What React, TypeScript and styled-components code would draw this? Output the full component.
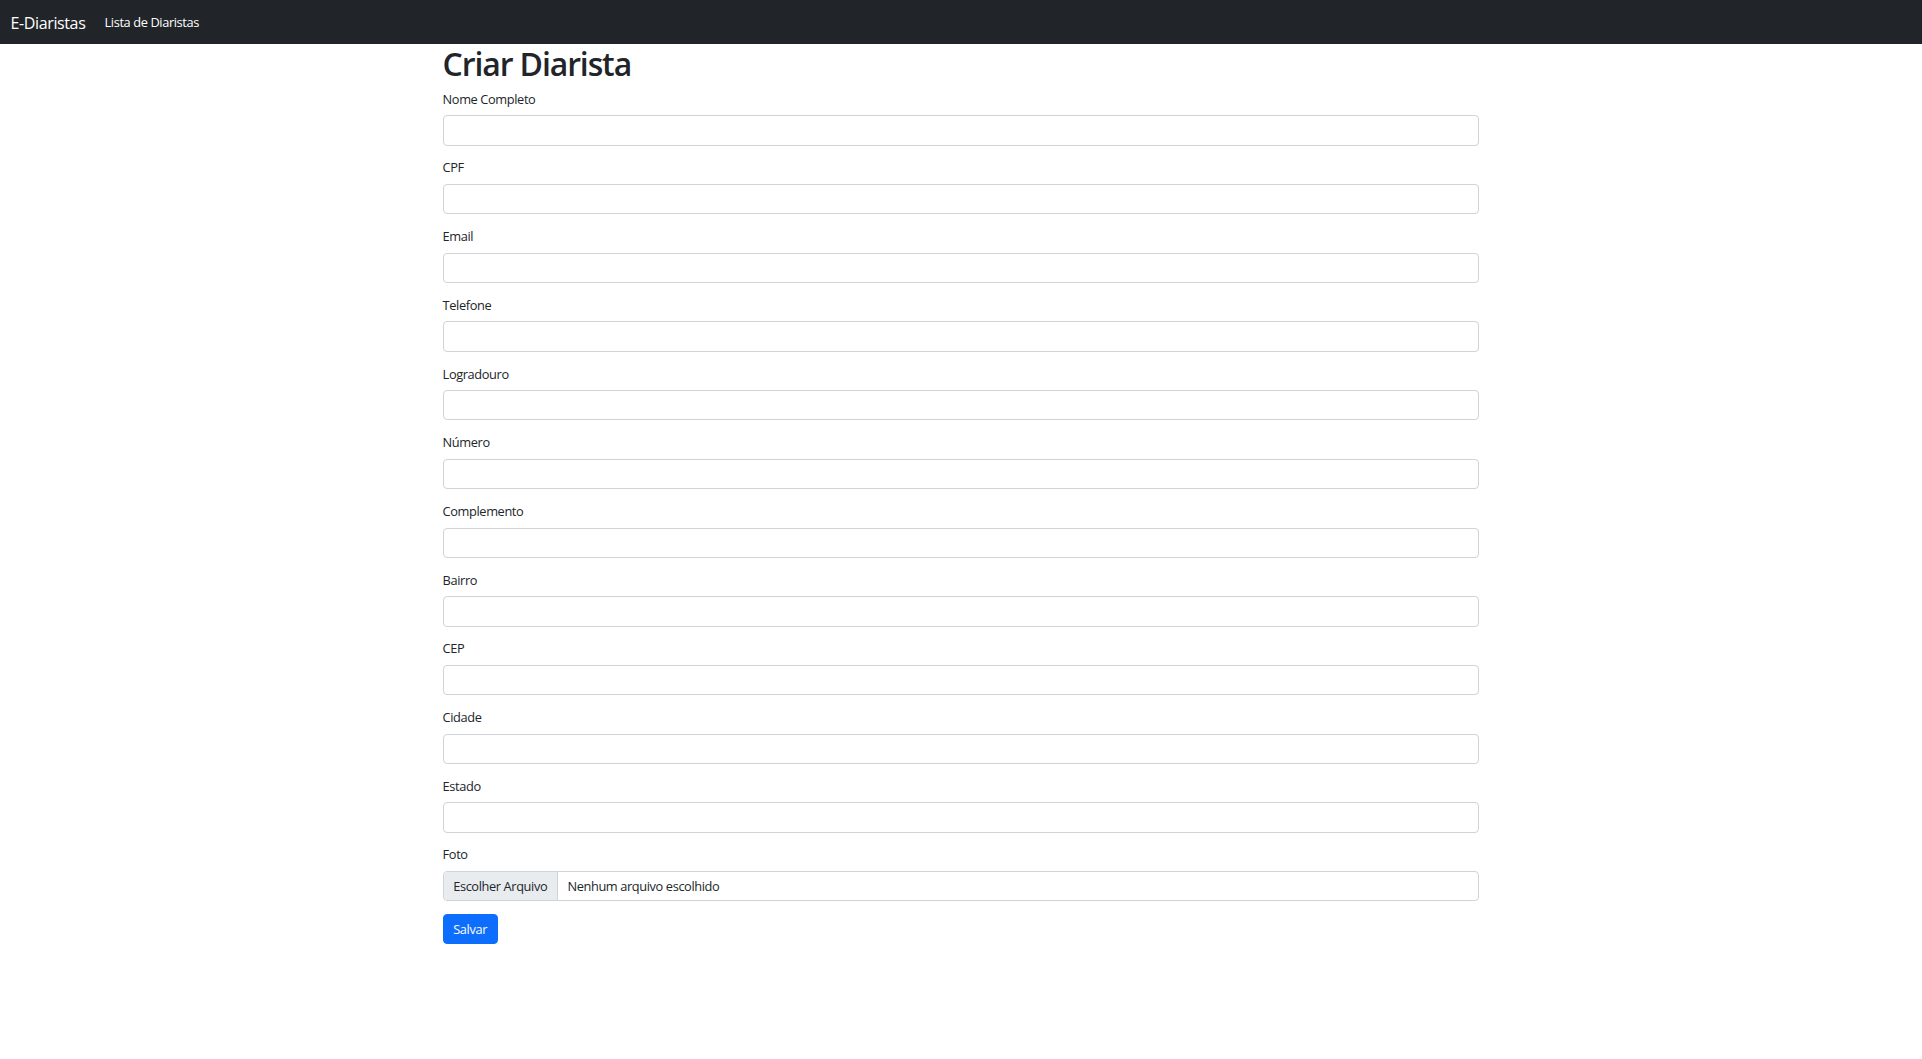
import React from "react";
import styled, { createGlobalStyle } from "styled-components";

const GlobalStyle = createGlobalStyle`
  *, *::before, *::after { box-sizing: border-box; }
  html, body { margin: 0; padding: 0; }
  body {
    font-family: "Open Sans", "Noto Sans", "Liberation Sans", sans-serif;
    font-size: 12.8px;
    line-height: 1.5;
    letter-spacing: -0.03em;
    color: #212529;
    background: #fff;
  }
`;

const Navbar = styled.nav`
  background: #212529;
  height: 44px;
  display: flex;
  align-items: center;
  padding: 1px 9.6px 0 10.6px;
`;

const Brand = styled.a`
  color: #fff;
  font-size: 16px;
  line-height: 24px;
  margin-right: 12.8px;
  text-decoration: none;
`;

const NavLink = styled.a`
  color: #fff;
  font-size: 12.8px;
  line-height: 19.2px;
  padding: 0 6.4px;
  text-decoration: none;
`;

const Container = styled.main`
  max-width: 1056px;
  margin: 0 auto;
  padding: 1px 9.6px 0;
`;

const Title = styled.h1`
  margin: 0 0 6.4px;
  font-size: 32px;
  font-weight: 600;
  line-height: 38.4px;
  letter-spacing: -0.035em;
`;

const Field = styled.div`
  margin-bottom: 12.8px;
`;

const Label = styled.label`
  display: block;
  margin-bottom: 6.4px;
  font-size: 12.8px;
  line-height: 19.2px;
`;

const Input = styled.input`
  display: block;
  width: 100%;
  height: 30.3px;
  padding: 4.8px 9.6px;
  font: inherit;
  color: #212529;
  background: #fff;
  border: 1px solid #ced4da;
  border-radius: 4px;
  outline: none;
`;

const FileBox = styled.div`
  display: flex;
  align-items: stretch;
  height: 30.3px;
  border: 1px solid #ced4da;
  border-radius: 4px;
  overflow: hidden;
`;

const FileButton = styled.span`
  display: flex;
  align-items: center;
  padding: 0 9.6px;
  background: #e9ecef;
  border-right: 1px solid #ced4da;
  color: #212529;
`;

const FileName = styled.span`
  display: flex;
  align-items: center;
  padding: 0 9.6px;
  color: #212529;
`;

const SubmitButton = styled.button`
  font: inherit;
  font-size: 12.8px;
  line-height: 19.2px;
  letter-spacing: -0.03em;
  height: 30.3px;
  padding: 0 9.6px;
  color: #fff;
  background: #0d6efd;
  border: 1px solid #0d6efd;
  border-radius: 4px;
  cursor: pointer;
`;

const fields = [
  "Nome Completo",
  "CPF",
  "Email",
  "Telefone",
  "Logradouro",
  "Número",
  "Complemento",
  "Bairro",
  "CEP",
  "Cidade",
  "Estado",
];

export default function App() {
  return (
    <>
      <GlobalStyle />
      <Navbar>
        <Brand href="#">E-Diaristas</Brand>
        <NavLink href="#">Lista de Diaristas</NavLink>
      </Navbar>
      <Container>
        <Title>Criar Diarista</Title>
        <form onSubmit={(e) => e.preventDefault()}>
          {fields.map((f) => (
            <Field key={f}>
              <Label>{f}</Label>
              <Input type="text" />
            </Field>
          ))}
          <Field>
            <Label>Foto</Label>
            <FileBox>
              <FileButton>Escolher Arquivo</FileButton>
              <FileName>Nenhum arquivo escolhido</FileName>
            </FileBox>
          </Field>
          <SubmitButton type="submit">Salvar</SubmitButton>
        </form>
      </Container>
    </>
  );
}
